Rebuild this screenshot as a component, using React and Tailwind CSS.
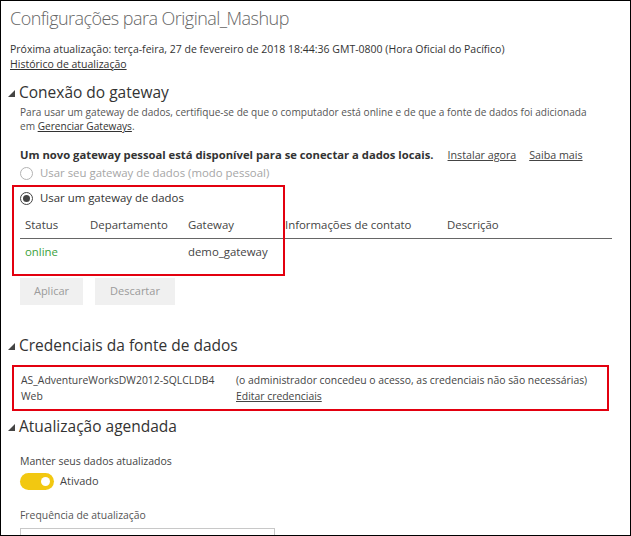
const font = { fontFamily: '"Open Sans", "Liberation Sans", sans-serif' };

function Caret() {
  return (
    <svg width="7" height="7" viewBox="0 0 7 7" className="mr-[4px] mt-[3px] shrink-0" aria-hidden="true">
      <polygon points="7,0 7,7 0,7" fill="#444" />
    </svg>
  );
}

function SectionTitle({ children }) {
  return (
    <div className="flex items-center pl-[7px] text-[15.5px] leading-[20px] text-[#333]">
      <Caret />
      <span>{children}</span>
    </div>
  );
}

function Radio({ checked, disabled, label }) {
  return (
    <label className={`flex items-center gap-[7px] text-[11.4px] leading-[16px] ${disabled ? 'text-[#a6a6a6]' : 'text-[#333]'}`}>
      <span
        className={`grid h-[13px] w-[13px] place-items-center rounded-full border ${
          disabled ? 'border-[#b3b3b3]' : 'border-[#444]'
        }`}
      >
        {checked && <span className="h-[7px] w-[7px] rounded-full bg-[#444]" />}
      </span>
      {label}
    </label>
  );
}

export default function App() {
  return (
    <div style={font} className="h-[536px] w-[631px] overflow-hidden border border-black bg-white text-[#333]">
      <h1 className="pl-[9px] pt-[5px] text-[18px] font-light leading-[24px] tracking-[-0.03em] text-[#666]">
        Configurações para Original_Mashup
      </h1>

      <div className="mt-[12px] pl-[9px] text-[10.5px] leading-[15px] text-[#333]">
        <p>Próxima atualização: terça-feira, 27 de fevereiro de 2018 18:44:36 GMT-0800 (Hora Oficial do Pacífico)</p>
        <p>
          <a className="underline">Histórico de atualização</a>
        </p>
      </div>

      <section className="mt-[10px]">
        <SectionTitle>Conexão do gateway</SectionTitle>
        <div className="pl-[19px] pr-[18px]">
          <div className="mt-[3px] text-[10.1px] leading-[14px] text-[#555]">
            <p>Para usar um gateway de dados, certifique-se de que o computador está online e de que a fonte de dados foi adicionada</p>
            <p>
              em <a className="text-[#333] underline">Gerenciar Gateways</a>.
            </p>
          </div>

          <div className="mt-[14px] flex items-baseline text-[11.25px] leading-[16px]">
            <span className="font-bold text-[#333]">Um novo gateway pessoal está disponível para se conectar a dados locais.</span>
            <a className="ml-[14px] text-[10.7px] text-[#444] underline">Instalar agora</a>
            <a className="ml-[13px] text-[10.7px] text-[#444] underline">Saiba mais</a>
          </div>

          <div className="mt-[2px]">
            <Radio disabled label="Usar seu gateway de dados (modo pessoal)" />
          </div>
        </div>

        <div className="relative mt-[4px] pl-[19px] pr-[18px]">
          <div className="pointer-events-none absolute left-[11px] top-0 h-[91px] w-[273px] border-2 border-[#e3000f]" />
          <div className="pt-[5px]">
            <Radio checked label="Usar um gateway de dados" />
          </div>
          <table className="mt-[10px] w-full border-collapse text-left text-[11.4px]">
            <thead>
              <tr className="border-b border-[#666] text-[#444]">
                <th className="w-[70px] pb-[5px] pl-[5px] font-normal">Status</th>
                <th className="w-[98px] pb-[5px] font-normal">Departamento</th>
                <th className="w-[97px] pb-[5px] font-normal">Gateway</th>
                <th className="w-[162px] pb-[5px] font-normal">Informações de contato</th>
                <th className="pb-[5px] font-normal">Descrição</th>
              </tr>
            </thead>
            <tbody>
              <tr>
                <td className="pl-[5px] pt-[4px] text-[#3ba13b]">online</td>
                <td />
                <td className="pt-[4px] text-[#444]">demo_gateway</td>
                <td />
                <td />
              </tr>
            </tbody>
          </table>

          <div className="mt-[18px] flex gap-[12px] text-[11px]">
            <button className="h-[27px] w-[63px] bg-[#f0f0f0] text-[#9b9b9b]">Aplicar</button>
            <button className="h-[27px] w-[80px] bg-[#f0f0f0] text-[#9b9b9b]">Descartar</button>
          </div>
        </div>
      </section>

      <section className="mt-[30px]">
        <SectionTitle>Credenciais da fonte de dados</SectionTitle>
        <div className="ml-[11px] mr-[21px] mt-[10px] flex border-2 border-[#e3000f] py-[5px] pl-[7px] text-[10.4px] leading-[16px] text-[#444]">
          <div className="w-[215px]">
            <p>AS_AdventureWorksDW2012-SQLCLDB4</p>
            <p>Web</p>
          </div>
          <div>
            <p>(o administrador concedeu o acesso, as credenciais não são necessárias)</p>
            <p>
              <a className="underline">Editar credenciais</a>
            </p>
          </div>
        </div>
      </section>

      <section className="mt-[5px]">
        <SectionTitle>Atualização agendada</SectionTitle>
        <div className="pl-[19px]">
          <p className="mt-[17px] text-[10.5px] leading-[16px] text-[#444]">Manter seus dados atualizados</p>
          <div className="mt-[4px] flex items-center gap-[6px] text-[11px] text-[#444]">
            <span className="flex h-[17px] w-[34px] items-center justify-end rounded-full bg-[#f2c811] pr-[4px]">
              <span className="h-[9px] w-[9px] rounded-full bg-white" />
            </span>
            Ativado
          </div>
          <p className="mt-[17px] text-[10.4px] leading-[16px] text-[#555]">Frequência de atualização</p>
          <div className="mt-[5px] h-[20px] w-[255px] border border-[#c8c8c8]" />
        </div>
      </section>
    </div>
  );
}
